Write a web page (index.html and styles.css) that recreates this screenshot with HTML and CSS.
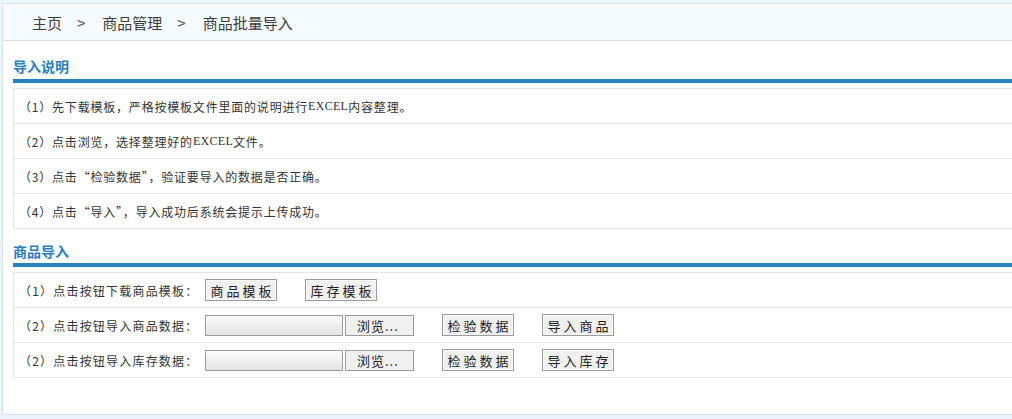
FILE: index.html
```html
<!DOCTYPE html>
<html lang="zh-CN">
<head>
<meta charset="utf-8">
<title>商品批量导入</title>
<link rel="stylesheet" href="styles.css">
</head>
<body>
<div class="frame">
  <div class="crumbs">
    <span class="crumb">主页</span><span class="sep">&gt;</span><span class="crumb">商品管理</span><span class="sep">&gt;</span><span class="crumb">商品批量导入</span>
  </div>

  <div class="section first">
    <h2 class="title">导入说明</h2>
    <div class="bar"></div>
    <div class="table">
      <div class="row">（1）先下载模板，严格按模板文件里面的说明进行<span class="latin">EXCEL</span>内容整理。</div>
      <div class="row">（2）点击浏览，选择整理好的<span class="latin">EXCEL</span>文件。</div>
      <div class="row">（3）点击“检验数据”，验证要导入的数据是否正确。</div>
      <div class="row">（4）点击“导入”，导入成功后系统会提示上传成功。</div>
    </div>
  </div>

  <div class="section second">
    <h2 class="title">商品导入</h2>
    <div class="bar"></div>
    <div class="table">
      <div class="row">
        <span class="label">（1）点击按钮下载商品模板：</span>
        <span class="btn">商品模板</span>
        <span class="btn gap">库存模板</span>
      </div>
      <div class="row">
        <span class="label">（2）点击按钮导入商品数据：</span>
        <span class="file-field"></span><span class="browse">浏览...</span>
        <span class="btn gap">检验数据</span>
        <span class="btn gap">导入商品</span>
      </div>
      <div class="row">
        <span class="label">（2）点击按钮导入库存数据：</span>
        <span class="file-field"></span><span class="browse">浏览...</span>
        <span class="btn gap">检验数据</span>
        <span class="btn gap">导入库存</span>
      </div>
    </div>
  </div>
</div>
</body>
</html>
```

FILE: styles.css
```css
html, body {
  margin: 0;
  padding: 0;
  overflow: hidden;
}
body {
  background: #ecf5fc;
  font-family: "Noto Sans CJK SC", "Liberation Sans", sans-serif;
  font-size: 12px;
  color: #333;
  padding-top: 3px;
  padding-left: 2px;
}
.frame {
  box-sizing: border-box;
  height: 412px;
  background: #fff;
  border: 1px solid #d9dee2;
  border-right: none;
}
.crumbs {
  height: 36px;
  background: #f5fbff;
  border-bottom: 1px solid #d9dee2;
  display: flex;
  align-items: center;
  padding-left: 29px;
  font-size: 15px;
  color: #3c3c3c;
}
.sep {
  margin: 0 17px 0 15px;
  color: #555;
}
.section {
  padding-left: 10px;
}
.section.first {
  padding-top: 15px;
}
.section.second {
  padding-top: 12px;
}
.title {
  margin: 0 0 2px 0;
  height: 20px;
  line-height: 20px;
  font-size: 14px;
  font-weight: bold;
  color: #2a7fc0;
}
.first .title {
  margin-bottom: 3px;
}
.bar {
  height: 4px;
  background: #2780c0;
  margin-bottom: 5px;
}
.table {
  border-top: 1px solid #e2e4e6;
  border-left: 1px solid #e2e4e6;
}
.row {
  height: 34px;
  border-bottom: 1px solid #e2e4e6;
  display: flex;
  align-items: center;
  padding-left: 5px;
  white-space: nowrap;
  letter-spacing: 0.8px;
}
.latin {
  font-family: "Liberation Serif", serif;
  font-size: 12px;
  letter-spacing: 0.3px;
}
.label {
  width: 186px;
  flex: none;
  letter-spacing: 1.2px;
}
.btn {
  box-sizing: border-box;
  width: 72px;
  height: 22px;
  flex: none;
  border: 1px solid #9b9b9b;
  background: #f0f0f0;
  box-shadow: inset 0 0 0 1px #fbfbfb;
  font-size: 13px;
  letter-spacing: 3px;
  padding-left: 3px;
  color: #222;
  display: flex;
  align-items: center;
  justify-content: center;
}
.btn.gap {
  margin-left: 28px;
}
.file-field {
  box-sizing: border-box;
  width: 138px;
  height: 21px;
  flex: none;
  border: 1px solid #9b9b9b;
  background: linear-gradient(#fbfbfb, #e3e3e3);
}
.browse {
  box-sizing: border-box;
  width: 69px;
  height: 21px;
  flex: none;
  margin-left: 2px;
  border: 1px solid #9b9b9b;
  background: #f0f0f0;
  font-size: 13px;
  color: #222;
  display: flex;
  align-items: center;
  padding-left: 11px;
  letter-spacing: 1px;
}
```
